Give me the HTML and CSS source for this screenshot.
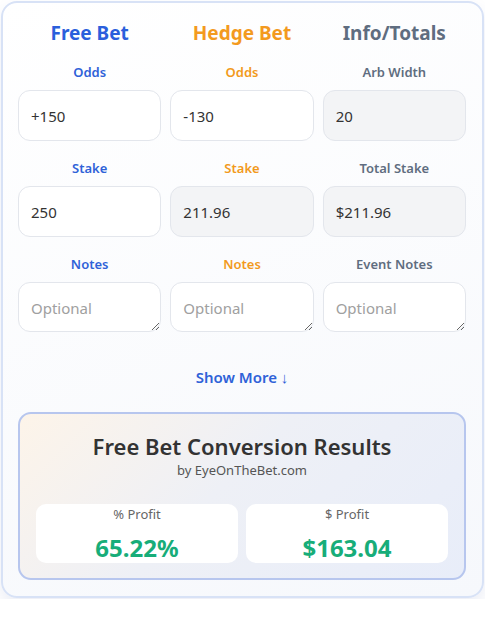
FILE: index.html
```html
<!DOCTYPE html>
<html lang="en">
<head>
  <meta charset="UTF-8" />
  <meta name="viewport" content="width=device-width, initial-scale=1.0"/>
  <title>Free Bet Converter</title>
  <link rel="stylesheet" href="styles.css">
</head>
<body>

  <div class="calc">
    <div class="grade">
      <h2 class="col-titulo azul">Free Bet</h2>
      <h2 class="col-titulo laranja">Hedge Bet</h2>
      <h2 class="col-titulo cinza">Info/Totals</h2>

      <div class="campo">
        <label class="azul">Odds</label>
        <input type="text" value="+150">
      </div>
      <div class="campo">
        <label class="laranja">Odds</label>
        <input type="text" value="-130">
      </div>
      <div class="campo">
        <label class="cinza">Arb Width</label>
        <input type="text" value="20" readonly class="leitura">
      </div>

      <div class="campo">
        <label class="azul">Stake</label>
        <input type="text" value="250">
      </div>
      <div class="campo">
        <label class="laranja">Stake</label>
        <input type="text" value="211.96" readonly class="leitura">
      </div>
      <div class="campo">
        <label class="cinza">Total Stake</label>
        <input type="text" value="$211.96" readonly class="leitura">
      </div>

      <div class="campo">
        <label class="azul">Notes</label>
        <textarea placeholder="Optional"></textarea>
      </div>
      <div class="campo">
        <label class="laranja">Notes</label>
        <textarea placeholder="Optional"></textarea>
      </div>
      <div class="campo">
        <label class="cinza">Event Notes</label>
        <textarea placeholder="Optional"></textarea>
      </div>
    </div>

    <button class="btnMais">Show More ↓</button>

    <div class="resultado">
      <h3>Free Bet Conversion Results</h3>
      <div class="sub">by EyeOnTheBet.com</div>
      <div class="caixas">
        <div class="caixa">
          <span class="rotulo">% Profit</span>
          <span class="valor">65.22%</span>
        </div>
        <div class="caixa">
          <span class="rotulo">$ Profit</span>
          <span class="valor">$163.04</span>
        </div>
      </div>
    </div>
  </div>

</body>
</html>
```

FILE: styles.css
```css
body {
  font-family: "Noto Sans", "Open Sans", sans-serif;
  margin: 0;
  padding: 1px;
  background-color: #ffffff;
  color: #333;
}

.calc {
  border: 2px solid #d8e2f6;
  border-radius: 16px;
  background: linear-gradient(160deg, #ffffff 0%, #f6f8fc 100%);
  box-shadow: 0 8px 16px rgba(60, 80, 160, 0.1);
  padding: 18px 16px 16px 15px;
}

.azul { color: #2f62d8; }
.laranja { color: #f29a1c; }
.cinza { color: #5f6d80; }

.grade {
  display: grid;
  grid-template-columns: 1fr 1fr 1fr;
  column-gap: 9px;
  row-gap: 18px;
}

.col-titulo {
  margin: 0;
  text-align: center;
  font-size: 19px;
  font-weight: 700;
  line-height: 24px;
}

.col-titulo.azul { color: #2a5fdc; }
.col-titulo.laranja { color: #f39a1e; }

.campo {
  display: flex;
  flex-direction: column;
}

.campo label {
  text-align: center;
  font-size: 13px;
  font-weight: 600;
  line-height: 18px;
  margin-bottom: 9px;
}

.campo input,
.campo textarea {
  box-sizing: border-box;
  width: 100%;
  border: 1px solid #e3e6ec;
  border-radius: 12px;
  background: #fff;
  font-family: inherit;
  font-size: 15px;
  color: #333;
  padding: 0 12px;
  margin: 0;
}

.campo input {
  height: 51px;
}

.campo textarea {
  height: 50px;
  padding-top: 15px;
  resize: vertical;
  display: block;
}

.campo textarea::placeholder {
  color: #a0a0a0;
}

.campo .leitura {
  background: #f3f4f6;
}

.btnMais {
  display: block;
  margin: 31px auto 21px;
  border: none;
  background: none;
  font-family: inherit;
  font-size: 15px;
  font-weight: 600;
  color: #2f62d8;
  cursor: pointer;
  padding: 4px 8px;
}

.resultado {
  border: 2px solid #b7c6ee;
  border-radius: 13px;
  background: linear-gradient(135deg, #fdf4e9 0%, #eef0f6 45%, #e8edf9 100%);
  padding: 17px 16px 15px;
  text-align: center;
}

.resultado h3 {
  margin: 0;
  font-size: 22px;
  font-weight: 600;
  line-height: 30px;
  color: #333;
}

.sub {
  font-size: 13px;
  color: #555;
  line-height: 18px;
}

.caixas {
  display: grid;
  grid-template-columns: 1fr 1fr;
  gap: 8px;
  margin-top: 25px;
}

.caixa {
  background: #fff;
  border-radius: 10px;
  padding: 1px 0 0;
  height: 59px;
  box-sizing: border-box;
  display: flex;
  flex-direction: column;
  align-items: center;
}

.rotulo {
  font-size: 13px;
  color: #666;
  line-height: 18px;
}

.valor {
  font-size: 24px;
  font-weight: 700;
  color: #17ad79;
  line-height: 30px;
  margin-top: 10px;
}
```
